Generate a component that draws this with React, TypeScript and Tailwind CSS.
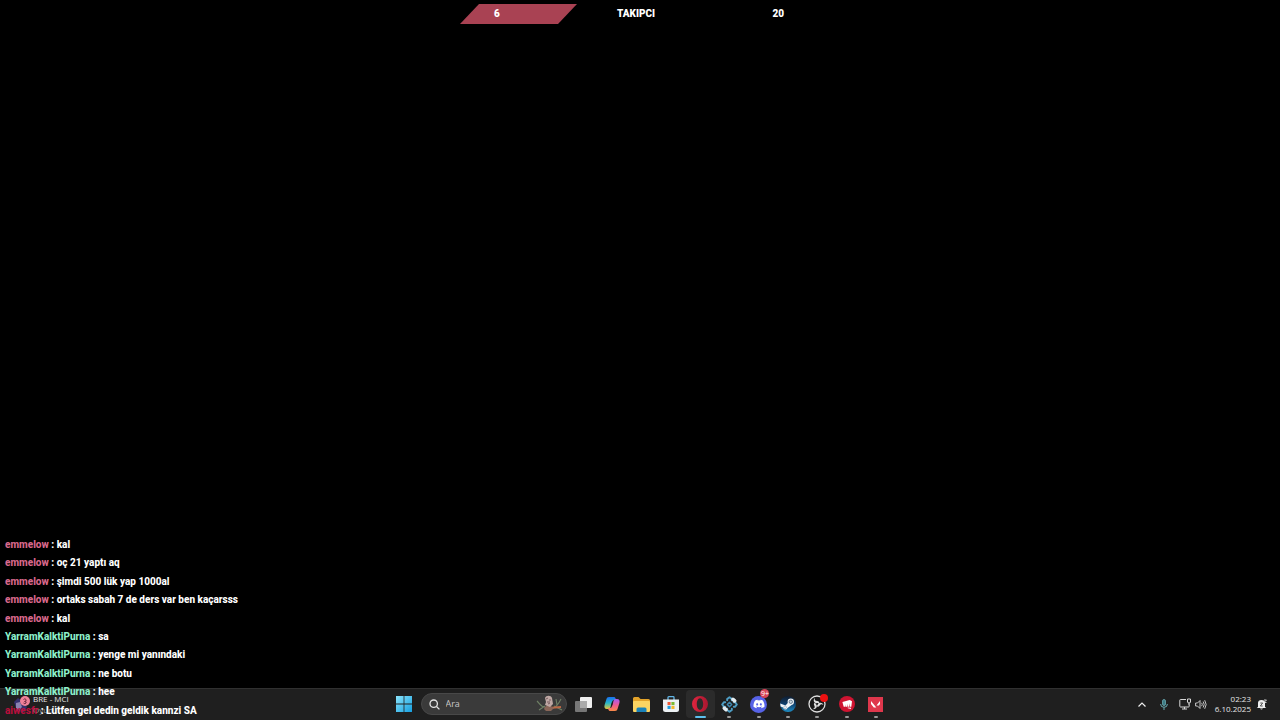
import type { ReactNode } from "react";
import { FaDiscord } from "react-icons/fa";

const messages = [
  { name: "emmelow", color: "text-[#d9688c]", text: "kal" },
  { name: "emmelow", color: "text-[#d9688c]", text: "oç 21 yaptı aq" },
  { name: "emmelow", color: "text-[#d9688c]", text: "şimdi 500 lük yap 1000al" },
  { name: "emmelow", color: "text-[#d9688c]", text: "ortaks sabah 7 de ders var ben kaçarsss" },
  { name: "emmelow", color: "text-[#d9688c]", text: "kal" },
  { name: "YarramKalktiPurna", color: "text-[#8df0cb]", text: "sa" },
  { name: "YarramKalktiPurna", color: "text-[#8df0cb]", text: "yenge mi yanındaki" },
  { name: "YarramKalktiPurna", color: "text-[#8df0cb]", text: "ne botu" },
  { name: "YarramKalktiPurna", color: "text-[#8df0cb]", text: "hee" },
  { name: "aiwesfr", color: "text-[#b80f3c]", text: "Lütfen gel dedin geldik kannzi SA" },
];

function FollowerGoal() {
  return (
    <header className="relative mx-auto mt-1 h-5 w-[360px]">
      <svg className="absolute inset-y-0 left-0 h-5 w-[117px]" viewBox="0 0 117 20" aria-hidden="true">
        <path d="M19 0H117L98 20H0Z" fill="#a94253" />
      </svg>
      <div className="relative flex h-5 items-center justify-between pr-9 pl-[34px] font-['Roboto',sans-serif] text-[10px] leading-5 font-black text-white">
        <span>6</span>
        <span>TAKIPCI</span>
        <span>20</span>
      </div>
    </header>
  );
}

function Chat() {
  return (
    <ul className="pointer-events-none absolute bottom-0 left-0 grid h-[184px] auto-rows-fr pl-[5px] font-['Roboto',sans-serif] text-[10px] leading-[18px] font-extrabold whitespace-nowrap text-white">
      {messages.map((m, i) => (
        <li key={i}>
          <span className={m.color}>{m.name}</span> : {m.text}
        </li>
      ))}
    </ul>
  );
}

function AppButton({ label, running, active, children }: { label: string; running?: boolean; active?: boolean; children: ReactNode }) {
  return (
    <button
      type="button"
      aria-label={label}
      className={`relative flex h-7 items-center justify-center rounded-sm ${active ? "bg-[#2b2b2b]" : ""}`}
    >
      {children}
      {running && (
        <span
          className={`absolute bottom-0 h-[2px] rounded-full ${active ? "w-[11px] bg-[#5cc0ee]" : "w-1 bg-[#9a9a9a]"}`}
        />
      )}
    </button>
  );
}

function WindowsIcon() {
  return (
    <svg className="size-4" viewBox="0 0 16 16" aria-hidden="true">
      <defs>
        <linearGradient id="win" x1="0" y1="0" x2="1" y2="1">
          <stop offset="0" stopColor="#8be4fb" />
          <stop offset="1" stopColor="#159fe0" />
        </linearGradient>
      </defs>
      <path d="M0 0H7.6V7.6H0ZM8.4 0H16V7.6H8.4ZM0 8.4H7.6V16H0ZM8.4 8.4H16V16H8.4Z" fill="url(#win)" />
    </svg>
  );
}

function SearchArt() {
  return (
    <svg className="h-[18px] w-7" viewBox="0 0 28 18" fill="none" aria-hidden="true">
      <path d="M1 6C4 9 5 12 9 12M3 15L9 11M17 13C21 12 23 8 25 4M18 11L26 15M21 10L20 4" stroke="#6f8065" strokeWidth="1.1" />
      <path d="M13 13L25 12" stroke="#bd6845" strokeWidth="1.8" />
      <path d="M8 14C9 11 11 10 13 10L18 13L15 16H10Z" fill="#8a6759" />
      <path d="M9 3C10 0 15 0 16 3L17 9L14 12L9 10L10 7Z" fill="#bfa8a4" />
      <path d="M10 4L12 3M13 5H15M11 7H14M12 9L14 8" stroke="#795d60" strokeWidth="1" />
    </svg>
  );
}

function TaskViewIcon() {
  return (
    <svg className="h-[15px] w-[17px]" viewBox="0 0 17 15" aria-hidden="true">
      <rect x="5" y="0" width="12" height="11" rx="1" fill="#efefef" />
      <rect x="0" y="4" width="12" height="11" rx="1" fill="#777" />
      <path d="M5 4H12V11H5Z" fill="#aaa" />
    </svg>
  );
}

function CopilotIcon() {
  return (
    <svg className="size-4" viewBox="0 0 16 16" aria-hidden="true">
      <defs>
        <linearGradient id="copA" x1="0" y1="0" x2="0" y2="1">
          <stop offset="0" stopColor="#1b6ff0" />
          <stop offset=".5" stopColor="#26b7c9" />
          <stop offset="1" stopColor="#e8c837" />
        </linearGradient>
        <linearGradient id="copB" x1="0" y1="0" x2="0" y2="1">
          <stop offset="0" stopColor="#a65af2" />
          <stop offset=".5" stopColor="#ed5a93" />
          <stop offset="1" stopColor="#f98a46" />
        </linearGradient>
      </defs>
      <path d="M5 1H10C11.4 1 11.6 2.4 12 4H10C8.7 4 8.3 5 8 6L6.5 11C6 12.5 5.2 13 4 13H3C.5 13 0 11 .6 9L2.4 3.2C2.9 1.7 3.5 1 5 1Z" fill="url(#copA)" />
      <path d="M11 15H6C4.6 15 4.4 13.6 4 12H6C7.3 12 7.7 11 8 10L9.5 5C10 3.5 10.8 3 12 3H13C15.5 3 16 5 15.4 7L13.6 12.8C13.1 14.3 12.5 15 11 15Z" fill="url(#copB)" />
      <path d="M8 6H9.2L8 10H6.8Z" fill="#1f1f1f" />
    </svg>
  );
}

function ExplorerIcon() {
  return (
    <svg className="h-[15px] w-[17px]" viewBox="0 0 17 15" aria-hidden="true">
      <path d="M0 1.5Q0 0 1.5 0H5.5L7.5 2H15.5Q17 2 17 3.5V6H0Z" fill="#e3a32a" />
      <path d="M0 5Q0 4 1 4H16Q17 4 17 5V14Q17 15 16 15H1Q0 15 0 14Z" fill="#fbd462" />
      <path d="M3.5 15V12Q3.5 10.5 5 10.5H12Q13.5 10.5 13.5 12V15Z" fill="#1a82b9" />
    </svg>
  );
}

function StoreIcon() {
  return (
    <svg className="size-4" viewBox="0 0 16 16" aria-hidden="true">
      <path d="M5 4V1.5Q5 .7 5.8 .7H10.2Q11 .7 11 1.5V4" fill="none" stroke="#62b5e5" strokeWidth="1.3" />
      <path d="M0 3.5H16V13.5Q16 16 13.5 16H2.5Q0 16 0 13.5Z" fill="#edf1f4" />
      <path d="M4.5 6H7.6V9.1H4.5Z" fill="#ef5a37" />
      <path d="M8.4 6H11.5V9.1H8.4Z" fill="#7aba32" />
      <path d="M4.5 9.9H7.6V13H4.5Z" fill="#239ee0" />
      <path d="M8.4 9.9H11.5V13H8.4Z" fill="#f3b72d" />
    </svg>
  );
}

function OperaIcon() {
  return (
    <svg className="size-4" viewBox="0 0 16 16" aria-hidden="true">
      <defs>
        <linearGradient id="opera" x1="0" y1="0" x2="1" y2="0">
          <stop offset="0" stopColor="#e0253f" />
          <stop offset="1" stopColor="#a81730" />
        </linearGradient>
      </defs>
      <path fillRule="evenodd" d="M8 0A8 8 0 1 1 8 16A8 8 0 1 1 8 0ZM8 2.2C6 2.2 4.8 5 4.8 8S6 13.8 8 13.8S11.2 11 11.2 8S10 2.2 8 2.2Z" fill="url(#opera)" />
    </svg>
  );
}

function ClusterIcon() {
  return (
    <svg className="size-[17px]" viewBox="0 0 17 17" fill="none" strokeLinecap="round" strokeLinejoin="round" aria-hidden="true">
      <path d="M6.2 4.2V3L8.5 1.2L10.8 3V4.200M6.2 12.8V14L8.5 15.8L10.8 14V12.8M4.2 6.2H3L1.200 8.5L3 10.8H4.200M12.8 6.2H14L15.8 8.5L14 10.8H12.8" stroke="#4d9cc2" strokeWidth="2" />
      <path d="M8.5 6.3L10.7 8.5L8.500 10.7L6.3 8.5Z" stroke="#3f86ad" strokeWidth="1.5" />
      <path d="M12 3.300L13.700 4.800M3.300 12.200L5 13.700" stroke="#e2ebf0" strokeWidth="3.6" />
    </svg>
  );
}

function SteamIcon() {
  return (
    <svg className="size-4" viewBox="0 0 16 16" aria-hidden="true">
      <defs>
        <linearGradient id="steam" x1="0" y1="0" x2="0" y2="1">
          <stop offset="0" stopColor="#111d2e" />
          <stop offset=".5" stopColor="#0e3f6c" />
          <stop offset="1" stopColor="#1f8ec5" />
        </linearGradient>
      </defs>
      <circle cx="8" cy="8" r="8" fill="url(#steam)" />
      <path d="M.2 7.4L5.5 9.6L8.7 6L12 8.8L7.5 12Q6.8 13.8 4.9 13.5Q3.3 13.1 3.1 11.5L.6 10.4Z" fill="#f0f4f7" />
      <circle cx="10.8" cy="5.8" r="3.2" fill="#f0f4f7" />
      <circle cx="10.8" cy="5.8" r="1.7" fill="#c9d5df" stroke="#254663" strokeWidth=".6" />
      <circle cx="5.1" cy="11.3" r="1.4" fill="none" stroke="#8fa5b8" strokeWidth=".6" />
    </svg>
  );
}

function ObsIcon() {
  return (
    <svg className="size-[18px]" viewBox="0 0 18 18" aria-hidden="true">
      <circle cx="9" cy="9" r="8" fill="#171717" stroke="#dedede" strokeWidth="1.3" />
      <g fill="#dedede">
        <path id="obs-blade" d="M8.6 8.2C5.8 7.8 4.8 5.1 6.7 2.9C6.3 5.1 7.6 6 9.3 5.9C10.8 6 11.5 7.1 11.2 8.7C10.5 7.9 9.6 7.7 8.6 8.2Z" />
        <use href="#obs-blade" transform="rotate(120 9 9)" />
        <use href="#obs-blade" transform="rotate(240 9 9)" />
      </g>
    </svg>
  );
}

function RiotIcon() {
  return (
    <svg className="size-4" viewBox="0 0 16 16" aria-hidden="true">
      <circle cx="8" cy="8" r="8" fill="#cf1431" />
      <path d="M3.4 6L10.7 4L13 5.2L12.3 10.8H10.8L10.7 7.2L10.1 10.8H8.7L8.3 7.7L8.1 10.8H6.6L6 8.2L6.2 10.8H4.7Z" fill="#fff" />
      <path d="M8.5 11.6L12.1 11.7L11.9 12.9L8.8 12.3Z" fill="#fff" />
    </svg>
  );
}

function ValorantIcon() {
  return (
    <svg className="size-[15px]" viewBox="0 0 15 15" aria-hidden="true">
      <path d="M0 0H15V15H0Z" fill="#df374c" />
      <path d="M3 4L8.3 10.5H5.8L3 7.1ZM12 4V7.1L10.9 8.5H8.5Z" fill="#fff" />
    </svg>
  );
}

function Taskbar() {
  return (
    <footer className="relative grid h-8 grid-cols-[1fr_auto_1fr] bg-[#1f1f1f] font-['Open_Sans',sans-serif] text-[#e6e6e6] inset-shadow-[0_1px_0_#303030]">
      <button type="button" className="flex items-center gap-[3px] pl-[13px] text-left" aria-label="BRE - MCI">
        <svg className="size-[17px]" viewBox="0 0 17 17" aria-hidden="true">
          <path d="M1 6L5 2L9 5L14 11L11 16L4 15Z" fill="#34306d" />
          <path d="M3 7L7 6L9 11L6 14L3 12Z" fill="#8b82b0" />
          <circle cx="12" cy="5" r="5" fill="#ef8199" />
          <path d="M10.5 3.5Q12 2 13 3.5T11.5 5.5Q14 5.5 13 7T10.5 7" fill="none" stroke="#6e2940" />
        </svg>
        <span className="flex flex-col self-start pt-[5px] text-[8px] leading-[11px]">
          <span>BRE - MCI</span>
          <span className="text-[#9a9a9a]">Oyun</span>
        </span>
      </button>

      <nav className="flex items-center gap-[2px]" aria-label="Taskbar">
        <button type="button" aria-label="Başlat" className="flex h-7 w-[29px] items-center justify-center">
          <WindowsIcon />
        </button>
        <label className="flex h-[22px] w-[146px] items-center rounded-full border border-[#484848] bg-[#3a3a3a] pr-[2px] pl-[7px]">
          <svg className="size-[11px] shrink-0" viewBox="0 0 11 11" fill="none" stroke="#e2e2e2" strokeWidth="1.3" aria-hidden="true">
            <circle cx="4.7" cy="4.7" r="3.7" />
            <path d="M7.5 7.5L10.4 10.4" />
          </svg>
          <input
            type="text"
            aria-label="Ara"
            placeholder="Ara"
            className="ml-1.5 w-0 min-w-0 flex-1 bg-transparent text-[9px] outline-none placeholder:text-[#c8c8c8]"
          />
          <SearchArt />
        </label>
        <div className="grid w-[322px] grid-cols-11">
          <AppButton label="Görev görünümü"><TaskViewIcon /></AppButton>
          <AppButton label="Copilot"><CopilotIcon /></AppButton>
          <AppButton label="Dosya Gezgini"><ExplorerIcon /></AppButton>
          <AppButton label="Microsoft Store"><StoreIcon /></AppButton>
          <AppButton label="Opera" running active><OperaIcon /></AppButton>
          <AppButton label="Uygulama" running><ClusterIcon /></AppButton>
          <AppButton label="Discord" running>
            <span className="flex size-[17px] items-center justify-center rounded-full bg-[#5662e6]">
              <FaDiscord className="size-3 text-white" />
            </span>
            <span className="absolute -top-px right-1 flex size-[9px] items-center justify-center rounded-full bg-[#d64458] text-[7px] leading-none text-white">9+</span>
          </AppButton>
          <AppButton label="Steam" running><SteamIcon /></AppButton>
          <AppButton label="OBS Studio" running>
            <ObsIcon />
            <span className="absolute top-1 right-1 size-2 rounded-full bg-[#ee1111]" />
          </AppButton>
          <AppButton label="Riot Client" running><RiotIcon /></AppButton>
          <AppButton label="VALORANT" running><ValorantIcon /></AppButton>
        </div>
      </nav>

      <div className="flex items-center justify-end pr-[13px]">
        <button type="button" aria-label="Gizli simgeler" className="mr-[14px]">
          <svg className="h-[5px] w-2" viewBox="0 0 8 5" fill="none" stroke="#eee" strokeWidth="1.2" aria-hidden="true">
            <path d="M.5 4.5L4 1L7.5 4.5" />
          </svg>
        </button>
        <button type="button" aria-label="Mikrofon" className="mr-[11px]">
          <svg className="h-[11px] w-2" viewBox="0 0 8 11" fill="none" aria-hidden="true">
            <rect x="2.5" y=".5" width="3" height="6" rx="1.5" fill="#3d7c85" stroke="#69a9b0" strokeWidth=".8" />
            <path d="M.6 5Q.6 8.3 4 8.3T7.4 5M4 8.3V11" stroke="#69a9b0" />
          </svg>
        </button>
        <button type="button" aria-label="Ağ ve ses" className="mr-2 flex items-center gap-1">
          <svg className="size-3" viewBox="0 0 12 12" fill="none" stroke="#d8d8d8" aria-hidden="true">
            <path d="M7 1.5H1.5Q.8 1.5 .8 2.2V8.3Q.8 9 1.5 9H9.5Q10.2 9 10.2 8.3V6.5M5.5 9V11M3 11H8" />
            <path d="M8.5 1H11.5V4Q11.5 5 10 5T8.5 4ZM10 5V7" />
          </svg>
          <svg className="h-[11px] w-3" viewBox="0 0 12 11" fill="none" stroke="#d8d8d8" strokeWidth=".9" aria-hidden="true">
            <path d="M.6 4H2.5L5 1.5V9.5L2.5 7H.6ZM6.7 3.8Q7.8 5.5 6.7 7.2M8.2 2.5Q10.2 5.5 8.2 8.5M9.7 1.2Q12.6 5.5 9.7 9.8" />
          </svg>
        </button>
        <button type="button" className="flex items-center gap-[5px] text-right text-[8px] leading-[10px]" aria-label="02:23 6.10.2025">
          <span className="flex flex-col">
            <span>02:23</span>
            <span>6.10.2025</span>
          </span>
          <svg className="size-[11px]" viewBox="0 0 11 11" aria-hidden="true">
            <path d="M2 8V4Q2 1 5.5 1T9 4V8L10.3 9H.7ZM4 9.6H7Q5.5 11.3 4 9.6Z" fill="#eee" />
            <path d="M4.3 4H6.7L4.3 7H6.7" fill="none" stroke="#333" strokeWidth=".8" />
            <path d="M8 1H10.5L8 3.5H10.5" fill="none" stroke="#eee" strokeWidth=".8" />
          </svg>
        </button>
      </div>
    </footer>
  );
}

export default function App() {
  return (
    <div className="relative flex min-h-screen flex-col overflow-hidden bg-black">
      <FollowerGoal />
      <main className="flex-1" />
      <Taskbar />
      <Chat />
    </div>
  );
}
